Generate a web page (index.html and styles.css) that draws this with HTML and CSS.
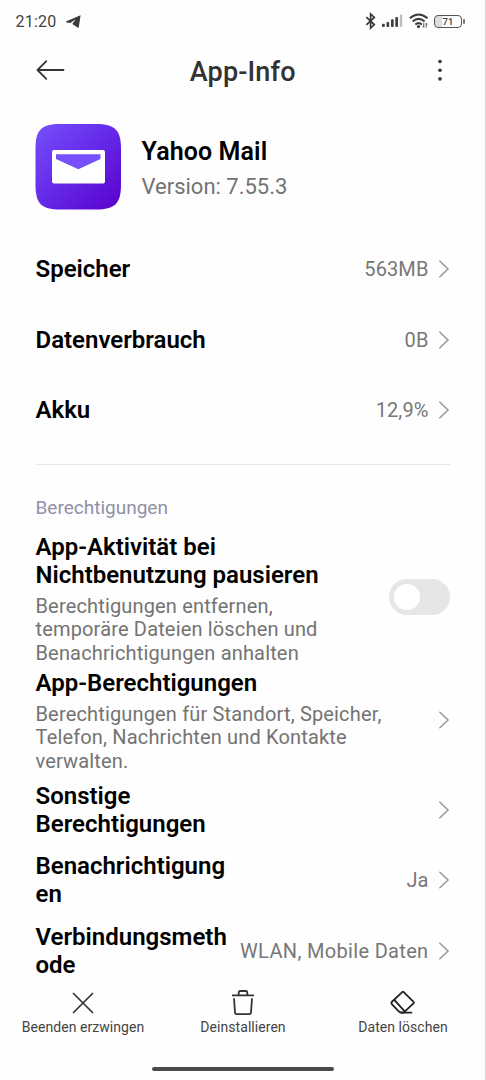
FILE: index.html
```html
<!DOCTYPE html>
<html lang="de">
<head>
<meta charset="utf-8">
<title>App-Info</title>
<link rel="stylesheet" href="styles.css">
</head>
<body>
<svg width="0" height="0" class="defs">
  <symbol id="chevron" viewBox="0 0 12 20"><path d="M1.400 1.800 10 10 1.400 18.200" fill="none" stroke="#989898" stroke-width="1.500"/></symbol>
</svg>
<div class="screen">
  <header class="status">
    <span class="clock">21:20</span>
    <svg class="plane" width="15" height="13" viewBox="0 0 15 13"><path d="M14.600.2.4 6.300c-.5.3-.3 1 .2 1.100l3.700.5L9.600 4.300 6.300 8.900l5.300 3.600c.6.400 1.100.1 1.200-.5z" fill="#3b3b3b"/></svg>
    <svg class="bt" width="12" height="18" viewBox="0 0 12 18"><path d="M1.300 5.200 9.300 12.500 5.600 16V2l3.700 3.500-8 7.300" fill="none" stroke="#3a3a3a" stroke-width="1.700"/></svg>
    <svg class="signal" width="21" height="14" viewBox="0 0 21 14"><g fill="#3f3f3f"><rect x="0" y="9.800" width="2.800" height="3.200" rx="1"/><rect x="4.500" y="8" width="2.700" height="5" rx="1"/><rect x="9" y="5.300" width="2.700" height="7.700" rx="1"/><rect x="13.300" y="3" width="2.700" height="10" rx="1"/></g><rect x="17.800" y="0.500" width="2.400" height="12.500" rx="1" fill="#bdbdbd"/></svg>
    <svg class="wifi" width="20" height="16" viewBox="0 0 20 16"><g fill="none" stroke="#3d3d3d" stroke-width="2"><path d="M.8 5.300Q9.500-2.300 18.500 5.300"/><path d="M3.600 8.500q6-5.200 12 0"/><path d="M6.300 11.500q3.300-2.800 6.600 0"/></g><circle cx="9.500" cy="13.600" r="1.600" fill="#3d3d3d"/><path d="M14.800 10v4.300m-1.200-1.300 1.200 1.400M17.200 14.500v-4.300m1.200 1.300-1.200-1.400" stroke="#555" fill="none"/></svg>
    <div class="battery"><span>71</span></div>
  </header>

  <nav class="topbar">
    <svg width="29" height="22" viewBox="0 0 29 22"><path d="M27.500 11H1.500M10.300 2.200 1.500 11l8.800 8.800" fill="none" stroke="#333" stroke-width="1.800" stroke-linecap="round" stroke-linejoin="round"/></svg>
    <h1>App-Info</h1>
    <svg width="6" height="22" viewBox="0 0 6 22"><g fill="#333"><circle cx="3" cy="2.500" r="1.800"/><circle cx="3" cy="11.200" r="1.800"/><circle cx="3" cy="19.900" r="1.800"/></g></svg>
  </nav>

  <section class="app">
    <svg width="86" height="86" viewBox="0 0 86 86">
      <defs><linearGradient id="violet" x1="0" y1="0" x2="1" y2="1"><stop offset="0" stop-color="#7550fb"/><stop offset=".5" stop-color="#6428e8"/><stop offset="1" stop-color="#5b00cc"/></linearGradient></defs>
      <path d="M.5 25C.5 6 6 0 25 0h36c19 0 25 6 25 25v35.500c0 19-6 25-25 25H25C6 85.500.5 79.500.5 60.500z" fill="url(#violet)"/>
      <rect x="17" y="26" width="53" height="33.500" rx="2" fill="#fff"/>
      <path d="M21 30.200h44.500v4.800L43.300 45.300 21 35z" fill="#7550fb"/>
    </svg>
    <div>
      <h2 class="title app-name">Yahoo Mail</h2>
      <p class="version">Version: 7.55.3</p>
    </div>
  </section>

  <main>
    <div class="row"><h3 class="title">Speicher</h3><span class="value">563MB</span><svg class="chev"><use href="#chevron"/></svg></div>
    <div class="row"><h3 class="title">Datenverbrauch</h3><span class="value">0B</span><svg class="chev"><use href="#chevron"/></svg></div>
    <div class="row"><h3 class="title">Akku</h3><span class="value">12,9%</span><svg class="chev"><use href="#chevron"/></svg></div>
    <hr>
    <p class="section">Berechtigungen</p>
    <div class="row activity">
      <div class="grow"><h3 class="title">App-Aktivität bei<br>Nichtbenutzung pausieren</h3><p class="sub">Berechtigungen entfernen,<br>temporäre Dateien löschen und<br>Benachrichtigungen anhalten</p></div>
      <span class="toggle"></span>
    </div>
    <div class="row perms">
      <div class="grow"><h3 class="title">App-Berechtigungen</h3><p class="sub">Berechtigungen für Standort, Speicher,<br>Telefon, Nachrichten und Kontakte<br>verwalten.</p></div>
      <svg class="chev"><use href="#chevron"/></svg>
    </div>
    <div class="row"><h3 class="title">Sonstige<br>Berechtigungen</h3><svg class="chev"><use href="#chevron"/></svg></div>
    <div class="row"><h3 class="title">Benachrichtigung<br>en</h3><span class="value">Ja</span><svg class="chev"><use href="#chevron"/></svg></div>
    <div class="row"><h3 class="title">Verbindungsmeth<br>ode</h3><span class="value wide">WLAN, Mobile Daten</span><svg class="chev"><use href="#chevron"/></svg></div>
  </main>

  <footer class="actions">
    <div class="action"><svg width="28" height="28" viewBox="0 0 28 28"><path d="m4.500 4.500 19 19m0-19-19 19" stroke="#333" stroke-width="1.700" stroke-linecap="round"/></svg><span>Beenden erzwingen</span></div>
    <div class="action"><svg width="28" height="28" viewBox="0 0 28 28"><g fill="none" stroke="#333" stroke-width="1.800"><path d="M3 6.300h22M9.700 6V3.700q0-1.700 1.700-1.700h5.200q1.700 0 1.700 1.700V6"/><path d="M5 9.300 6 23.600q.1 1.600 1.700 1.600h12.600q1.600 0 1.700-1.600L23 9.300"/></g></svg><span>Deinstallieren</span></div>
    <div class="action"><svg width="28" height="28" viewBox="0 0 28 28"><g fill="none" stroke="#222" stroke-width="1.800" stroke-linejoin="round"><path d="m13.200 3.200-10 9.300q-1.500 1.400-.2 2.900l6.800 7q1.300 1.300 3 1.300h1.800l9.900-9.300q.8-.8.100-1.600l-9.900-9.700q-.8-.7-1.500.1z"/><path d="m5.300 10.800 10.200 11.400M11.500 23.700h11.700"/></g></svg><span>Daten löschen</span></div>
  </footer>
  <div class="home"></div>
</div>
</body>
</html>
```
FILE: styles.css
```css
* { box-sizing: border-box; margin: 0; padding: 0; }
body { font-family: Roboto, "Liberation Sans", sans-serif; background: #fefefe; }
svg { display: block; flex: none; }
.defs { position: absolute; }
.screen { width: 486px; height: 1080px; overflow: hidden; display: flex; flex-direction: column; border-right: 1px solid #d4d4d4; }
.status { height: 42px; flex: none; display: flex; align-items: center; padding: 0 21px 0 15.500px; }
.clock { font-size: 16px; color: #444; letter-spacing: .2px; width: 50px; }
.plane { margin-right: auto; }
.bt { margin-right: 5px; }
.signal { margin-right: 6px; }
.wifi { margin-right: 5px; }
.battery { position: relative; width: 28px; height: 13px; margin-right: 2px; border: 1.500px solid #555; border-radius: 4px; font-size: 9.500px; font-weight: 500; line-height: 11px; text-align: center; color: #444; background: linear-gradient(90deg, #ddd 7px, transparent 7px); }
.battery::after { content: ""; position: absolute; right: -4px; top: 3px; width: 2px; height: 5px; border-radius: 1px; background: #777; }
.topbar { height: 57px; flex: none; display: flex; align-items: center; justify-content: space-between; padding: 0 42px 0 36px; }
.topbar svg { margin-bottom: 1px; }
.topbar h1 { font-size: 27px; font-weight: 500; color: #333; line-height: 32px; margin: 3px 16.500px 0 0; letter-spacing: .15px; }
.app { height: 135px; flex: none; display: flex; align-items: flex-start; gap: 20.500px; padding: 24.500px 35px 0; }
.title { font-size: 24px; line-height: 28.200px; font-weight: 600; color: #000; white-space: nowrap; }
.app-name { margin-top: 14px; font-size: 25px; letter-spacing: .1px; }
.version { font-size: 22px; line-height: 26px; margin-top: 8px; color: #737373; }
main { flex: none; height: 751px; padding: 0 35px 0 35.500px; }
.row { height: 70.500px; display: flex; align-items: center; }
.value { margin-left: auto; font-size: 20px; color: #777; white-space: nowrap; letter-spacing: .1px; }
.wide { letter-spacing: .33px; }
.chev { width: 12px; height: 20px; margin-left: 9.500px; }
.row > .title + .chev, .grow + .chev { margin-left: auto; }
hr { border: 0; height: 1px; background: #e6e6e6; margin-top: 18px; }
.section { font-size: 19px; line-height: 24px; color: #9090a8; margin: 31px 0 12px; }
.sub { font-size: 20px; line-height: 23.500px; letter-spacing: .16px; color: #737373; margin-top: 6px; white-space: nowrap; }
.activity { height: 132px; }
.activity .grow { padding-top: 3px; }
.perms { height: 111px; padding-top: 4px; }
.perms .chev { margin-bottom: 3px; }
.toggle { width: 61px; height: 36px; border-radius: 18px; background: #e6e6e6; margin: 0 0 2px auto; padding: 5px; }
.toggle::before { content: ""; display: block; width: 26px; height: 26px; border-radius: 50%; background: #fff; }
.actions { flex: none; height: 60px; display: grid; grid-template-columns: repeat(3, 160px); justify-content: center; padding: 4px 0 0 1px; }
.action { display: flex; flex-direction: column; align-items: center; font-size: 14px; line-height: 16px; color: #444; gap: 2px; letter-spacing: .05px; }
.home { flex: none; width: 182px; height: 4px; border-radius: 2px; background: #4a4a4a; margin: 22px auto 0; }
```
